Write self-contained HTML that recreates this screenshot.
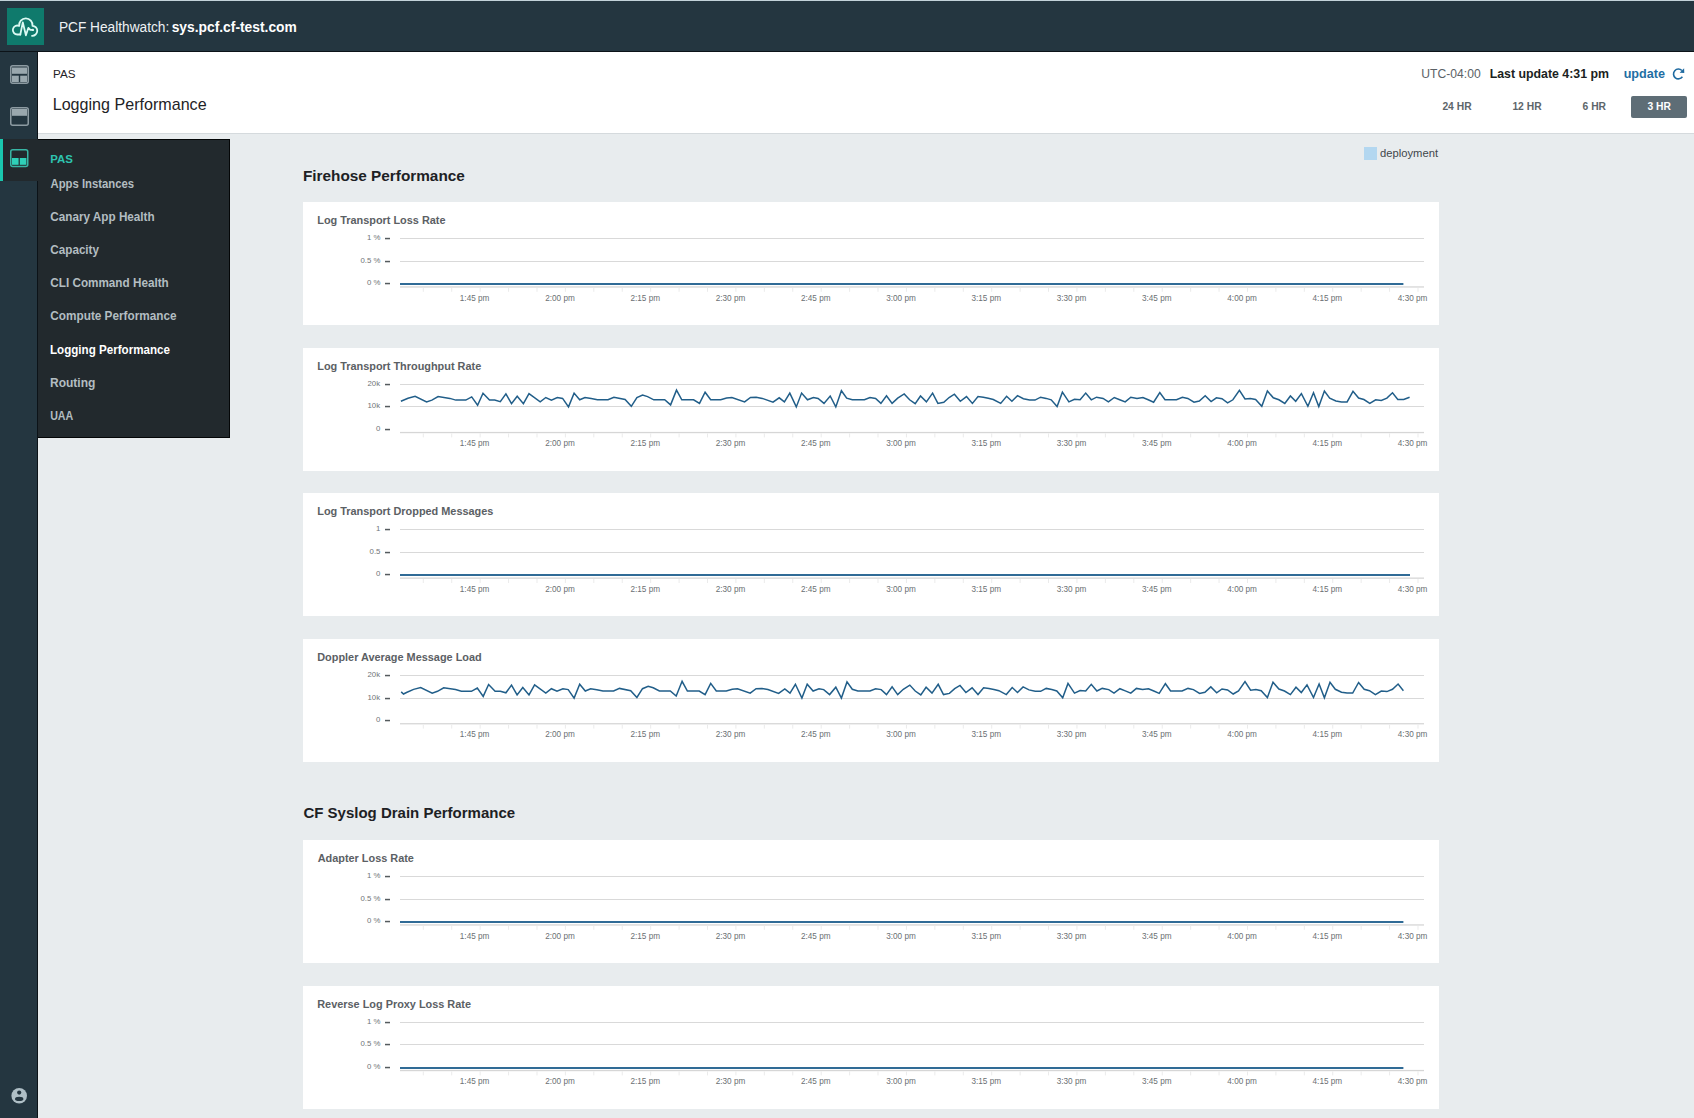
<!DOCTYPE html>
<html>
<head>
<meta charset="utf-8">
<title>PCF Healthwatch - Logging Performance</title>
<style>
html,body{margin:0;padding:0;}
body{width:1694px;height:1118px;overflow:hidden;position:relative;background:#e8ecee;font-family:"Liberation Sans",sans-serif;}
.abs{position:absolute;}
#topline{left:0;top:0;width:1694px;height:1px;background:#c3d2d9;}
#topbar{left:0;top:1px;width:1694px;height:50px;background:#243640;border-bottom:1px solid #0c1318;}
#logo{left:7px;top:8px;width:37px;height:37px;background:#0f7a6c;}
#sidenav{left:0;top:52px;width:37px;height:1066px;background:#243640;border-right:1px solid #0c1318;}
#navactive{left:0;top:139px;width:38px;height:42px;background:#22292d;}
#navbar{left:0;top:139px;width:3px;height:42px;background:#1ac7ae;}
#pagehead{left:38px;top:52px;width:1656px;height:81px;background:#ffffff;border-bottom:1px solid #d5dadd;}
#btn3{left:1631px;top:96px;width:56px;height:22px;background:#5e6d76;border-radius:2px;}
#dropdown{left:38px;top:139px;width:192px;height:299px;background:#22292d;box-sizing:border-box;border-top:1px solid #040607;border-right:1px solid #040607;border-bottom:1px solid #040607;}
#legendsq{left:1364px;top:147px;width:13px;height:13px;background:#b3d7f0;}
.panel{position:absolute;left:303px;width:1136px;height:123px;background:#ffffff;}
#overlay{position:absolute;left:0;top:0;}
#overlay text{font-family:"Liberation Sans",sans-serif;}
</style>
</head>
<body>
<div id="topline" class="abs"></div>
<div id="topbar" class="abs"></div>
<div id="logo" class="abs">
  <svg width="37" height="37" viewBox="7 8 37 37" style="display:block">
    <g fill="none" stroke="#dcfaf3" stroke-width="1.8" stroke-linejoin="round" stroke-linecap="round">
      <path d="M20.3 34.5 H17.4 A4.5 4.5 0 1 1 19.2 25.9 A6.7 6.7 0 1 1 32.5 25.8 A5.0 5.0 0 1 1 32.0 35.8"/>
      <path d="M20.3 34.5 L22.8 22.4 L25.9 35.3 L28.4 27.8 L30.3 29.9 H32.6"/>
    </g>
    <circle cx="32.8" cy="29.9" r="1.2" fill="#dcfaf3"/>
  </svg>
</div>
<div id="sidenav" class="abs">
  <svg width="37" height="1066" viewBox="0 52 37 1066" style="display:block">
    <!-- icon 1 -->
    <rect x="10.75" y="65.75" width="17.5" height="17.5" rx="2" fill="none" stroke="#8d9ba2" stroke-width="1.5"/>
    <rect x="12" y="67.5" width="15" height="6.3" fill="#9aa8ae"/>
    <rect x="12" y="75.7" width="6.8" height="6.3" fill="#9aa8ae"/>
    <rect x="20.2" y="75.7" width="6.8" height="6.3" fill="#9aa8ae"/>
    <!-- icon 2 -->
    <rect x="10.75" y="107.75" width="17.5" height="17.5" rx="2" fill="none" stroke="#8d9ba2" stroke-width="1.5"/>
    <rect x="12" y="109" width="15" height="6.8" fill="#9aa8ae"/>
  </svg>
</div>
<div id="navactive" class="abs"></div>
<div id="navbar" class="abs"></div>
<svg class="abs" style="left:0;top:139px" width="38" height="42" viewBox="0 139 38 42">
    <rect x="10.75" y="149.75" width="17" height="16.8" rx="2" fill="none" stroke="#38b5a4" stroke-width="1.5"/>
    <rect x="12" y="158" width="6.6" height="6.8" fill="#2fd0b8"/>
    <rect x="19.8" y="158" width="6.6" height="6.8" fill="#2fd0b8"/>
</svg>
<svg class="abs" style="left:8px;top:1085px" width="24" height="24" viewBox="8 1085 24 24">
    <circle cx="19.2" cy="1095.8" r="7.8" fill="#afbfc6"/>
    <circle cx="19.2" cy="1092.6" r="2.1" fill="#243640"/>
    <ellipse cx="19.2" cy="1098.9" rx="4.2" ry="2.1" fill="#243640"/>
</svg>
<div id="pagehead" class="abs"></div>
<div id="btn3" class="abs"></div>
<svg class="abs" style="left:1668px;top:64px" width="22" height="20" viewBox="1668 64 22 20">
  <path d="M1681.9 70.5 A4.9 4.9 0 1 0 1682.4 76.8" fill="none" stroke="#1f6aa0" stroke-width="1.6"/>
  <path d="M1684.1 68.3 L1684.3 73.1 L1679.6 72.8 Z" fill="#1f6aa0"/>
</svg>
<div id="legendsq" class="abs"></div>
<div class="panel" style="top:202px"></div>
<div class="panel" style="top:348px"></div>
<div class="panel" style="top:493px"></div>
<div class="panel" style="top:639px"></div>
<div class="panel" style="top:840px"></div>
<div class="panel" style="top:986px"></div>
<div id="dropdown" class="abs"></div>
<svg id="overlay" width="1694" height="1118">
<rect x="385" y="237.8" width="5" height="1.5" fill="#555b5e"/>
<rect x="385" y="260.8" width="5" height="1.5" fill="#555b5e"/>
<rect x="385" y="282.8" width="5" height="1.5" fill="#555b5e"/>
<rect x="400" y="238" width="1024" height="1" fill="#d9d9d9"/>
<rect x="400" y="261" width="1024" height="1" fill="#d9d9d9"/>
<rect x="400" y="286.3" width="1024" height="1.3" fill="#d6d6d6"/>
<rect x="422.80" y="287.8" width="1" height="4" fill="#ebebeb"/>
<rect x="451.22" y="287.8" width="1" height="4" fill="#ebebeb"/>
<rect x="479.64" y="287.8" width="1" height="4" fill="#ebebeb"/>
<rect x="508.06" y="287.8" width="1" height="4" fill="#ebebeb"/>
<rect x="536.48" y="287.8" width="1" height="4" fill="#ebebeb"/>
<rect x="564.90" y="287.8" width="1" height="4" fill="#ebebeb"/>
<rect x="593.32" y="287.8" width="1" height="4" fill="#ebebeb"/>
<rect x="621.74" y="287.8" width="1" height="4" fill="#ebebeb"/>
<rect x="650.16" y="287.8" width="1" height="4" fill="#ebebeb"/>
<rect x="678.58" y="287.8" width="1" height="4" fill="#ebebeb"/>
<rect x="707.00" y="287.8" width="1" height="4" fill="#ebebeb"/>
<rect x="735.42" y="287.8" width="1" height="4" fill="#ebebeb"/>
<rect x="763.84" y="287.8" width="1" height="4" fill="#ebebeb"/>
<rect x="792.26" y="287.8" width="1" height="4" fill="#ebebeb"/>
<rect x="820.68" y="287.8" width="1" height="4" fill="#ebebeb"/>
<rect x="849.10" y="287.8" width="1" height="4" fill="#ebebeb"/>
<rect x="877.52" y="287.8" width="1" height="4" fill="#ebebeb"/>
<rect x="905.94" y="287.8" width="1" height="4" fill="#ebebeb"/>
<rect x="934.36" y="287.8" width="1" height="4" fill="#ebebeb"/>
<rect x="962.78" y="287.8" width="1" height="4" fill="#ebebeb"/>
<rect x="991.20" y="287.8" width="1" height="4" fill="#ebebeb"/>
<rect x="1019.62" y="287.8" width="1" height="4" fill="#ebebeb"/>
<rect x="1048.04" y="287.8" width="1" height="4" fill="#ebebeb"/>
<rect x="1076.46" y="287.8" width="1" height="4" fill="#ebebeb"/>
<rect x="1104.88" y="287.8" width="1" height="4" fill="#ebebeb"/>
<rect x="1133.30" y="287.8" width="1" height="4" fill="#ebebeb"/>
<rect x="1161.72" y="287.8" width="1" height="4" fill="#ebebeb"/>
<rect x="1190.14" y="287.8" width="1" height="4" fill="#ebebeb"/>
<rect x="1218.56" y="287.8" width="1" height="4" fill="#ebebeb"/>
<rect x="1246.98" y="287.8" width="1" height="4" fill="#ebebeb"/>
<rect x="1275.40" y="287.8" width="1" height="4" fill="#ebebeb"/>
<rect x="1303.82" y="287.8" width="1" height="4" fill="#ebebeb"/>
<rect x="1332.24" y="287.8" width="1" height="4" fill="#ebebeb"/>
<rect x="1360.66" y="287.8" width="1" height="4" fill="#ebebeb"/>
<rect x="1389.08" y="287.8" width="1" height="4" fill="#ebebeb"/>
<rect x="1417.50" y="287.8" width="1" height="4" fill="#ebebeb"/>
<text x="459.82" y="300.50" font-size="8.20" font-weight="400" fill="#6b7073">1:45 pm</text>
<text x="545.19" y="300.50" font-size="8.20" font-weight="400" fill="#6b7073">2:00 pm</text>
<text x="630.44" y="300.50" font-size="8.20" font-weight="400" fill="#6b7073">2:15 pm</text>
<text x="715.69" y="300.50" font-size="8.20" font-weight="400" fill="#6b7073">2:30 pm</text>
<text x="800.94" y="300.50" font-size="8.20" font-weight="400" fill="#6b7073">2:45 pm</text>
<text x="886.23" y="300.50" font-size="8.20" font-weight="400" fill="#6b7073">3:00 pm</text>
<text x="971.48" y="300.50" font-size="8.20" font-weight="400" fill="#6b7073">3:15 pm</text>
<text x="1056.73" y="300.50" font-size="8.20" font-weight="400" fill="#6b7073">3:30 pm</text>
<text x="1141.98" y="300.50" font-size="8.20" font-weight="400" fill="#6b7073">3:45 pm</text>
<text x="1227.31" y="300.50" font-size="8.20" font-weight="400" fill="#6b7073">4:00 pm</text>
<text x="1312.56" y="300.50" font-size="8.20" font-weight="400" fill="#6b7073">4:15 pm</text>
<text x="1397.81" y="300.50" font-size="8.20" font-weight="400" fill="#6b7073">4:30 pm</text>
<rect x="400" y="283" width="1003.4" height="2" fill="#306b96"/>
<rect x="385" y="383.8" width="5" height="1.5" fill="#555b5e"/>
<rect x="385" y="405.8" width="5" height="1.5" fill="#555b5e"/>
<rect x="385" y="428.8" width="5" height="1.5" fill="#555b5e"/>
<rect x="400" y="384" width="1024" height="1" fill="#d9d9d9"/>
<rect x="400" y="406" width="1024" height="1" fill="#d9d9d9"/>
<rect x="400" y="431.9" width="1024" height="1.3" fill="#d6d6d6"/>
<rect x="422.80" y="433.4" width="1" height="4" fill="#ebebeb"/>
<rect x="451.22" y="433.4" width="1" height="4" fill="#ebebeb"/>
<rect x="479.64" y="433.4" width="1" height="4" fill="#ebebeb"/>
<rect x="508.06" y="433.4" width="1" height="4" fill="#ebebeb"/>
<rect x="536.48" y="433.4" width="1" height="4" fill="#ebebeb"/>
<rect x="564.90" y="433.4" width="1" height="4" fill="#ebebeb"/>
<rect x="593.32" y="433.4" width="1" height="4" fill="#ebebeb"/>
<rect x="621.74" y="433.4" width="1" height="4" fill="#ebebeb"/>
<rect x="650.16" y="433.4" width="1" height="4" fill="#ebebeb"/>
<rect x="678.58" y="433.4" width="1" height="4" fill="#ebebeb"/>
<rect x="707.00" y="433.4" width="1" height="4" fill="#ebebeb"/>
<rect x="735.42" y="433.4" width="1" height="4" fill="#ebebeb"/>
<rect x="763.84" y="433.4" width="1" height="4" fill="#ebebeb"/>
<rect x="792.26" y="433.4" width="1" height="4" fill="#ebebeb"/>
<rect x="820.68" y="433.4" width="1" height="4" fill="#ebebeb"/>
<rect x="849.10" y="433.4" width="1" height="4" fill="#ebebeb"/>
<rect x="877.52" y="433.4" width="1" height="4" fill="#ebebeb"/>
<rect x="905.94" y="433.4" width="1" height="4" fill="#ebebeb"/>
<rect x="934.36" y="433.4" width="1" height="4" fill="#ebebeb"/>
<rect x="962.78" y="433.4" width="1" height="4" fill="#ebebeb"/>
<rect x="991.20" y="433.4" width="1" height="4" fill="#ebebeb"/>
<rect x="1019.62" y="433.4" width="1" height="4" fill="#ebebeb"/>
<rect x="1048.04" y="433.4" width="1" height="4" fill="#ebebeb"/>
<rect x="1076.46" y="433.4" width="1" height="4" fill="#ebebeb"/>
<rect x="1104.88" y="433.4" width="1" height="4" fill="#ebebeb"/>
<rect x="1133.30" y="433.4" width="1" height="4" fill="#ebebeb"/>
<rect x="1161.72" y="433.4" width="1" height="4" fill="#ebebeb"/>
<rect x="1190.14" y="433.4" width="1" height="4" fill="#ebebeb"/>
<rect x="1218.56" y="433.4" width="1" height="4" fill="#ebebeb"/>
<rect x="1246.98" y="433.4" width="1" height="4" fill="#ebebeb"/>
<rect x="1275.40" y="433.4" width="1" height="4" fill="#ebebeb"/>
<rect x="1303.82" y="433.4" width="1" height="4" fill="#ebebeb"/>
<rect x="1332.24" y="433.4" width="1" height="4" fill="#ebebeb"/>
<rect x="1360.66" y="433.4" width="1" height="4" fill="#ebebeb"/>
<rect x="1389.08" y="433.4" width="1" height="4" fill="#ebebeb"/>
<rect x="1417.50" y="433.4" width="1" height="4" fill="#ebebeb"/>
<text x="459.82" y="446.10" font-size="8.20" font-weight="400" fill="#6b7073">1:45 pm</text>
<text x="545.19" y="446.10" font-size="8.20" font-weight="400" fill="#6b7073">2:00 pm</text>
<text x="630.44" y="446.10" font-size="8.20" font-weight="400" fill="#6b7073">2:15 pm</text>
<text x="715.69" y="446.10" font-size="8.20" font-weight="400" fill="#6b7073">2:30 pm</text>
<text x="800.94" y="446.10" font-size="8.20" font-weight="400" fill="#6b7073">2:45 pm</text>
<text x="886.23" y="446.10" font-size="8.20" font-weight="400" fill="#6b7073">3:00 pm</text>
<text x="971.48" y="446.10" font-size="8.20" font-weight="400" fill="#6b7073">3:15 pm</text>
<text x="1056.73" y="446.10" font-size="8.20" font-weight="400" fill="#6b7073">3:30 pm</text>
<text x="1141.98" y="446.10" font-size="8.20" font-weight="400" fill="#6b7073">3:45 pm</text>
<text x="1227.31" y="446.10" font-size="8.20" font-weight="400" fill="#6b7073">4:00 pm</text>
<text x="1312.56" y="446.10" font-size="8.20" font-weight="400" fill="#6b7073">4:15 pm</text>
<text x="1397.81" y="446.10" font-size="8.20" font-weight="400" fill="#6b7073">4:30 pm</text>
<polyline points="400.9,401.3 408.0,398.2 415.1,396.3 426.6,401.9 431.9,400.1 438.1,396.6 449.9,398.4 455.8,400.1 465.8,400.1 471.7,396.9 477.6,405.2 483.0,393.3 489.5,400.1 494.7,400.1 500.3,401.6 505.9,393.9 511.5,403.7 517.2,396.3 523.4,403.7 529.0,393.6 540.2,401.9 545.8,397.5 551.4,400.1 557.3,397.5 562.6,398.4 568.5,406.9 574.1,393.1 579.7,399.8 585.0,397.5 591.2,398.6 597.4,399.8 608.0,399.8 613.9,397.2 625.1,399.5 631.3,406.3 636.9,397.5 642.6,395.1 647.6,396.6 653.8,399.8 664.7,399.8 670.6,404.9 676.5,390.1 681.8,399.8 693.6,399.8 699.5,403.4 705.1,392.2 710.7,399.8 720.7,399.8 726.6,398.1 731.9,397.5 744.6,401.9 750.5,397.5 756.2,397.2 762.3,398.4 773.0,402.2 779.2,397.8 784.4,401.9 789.8,393.1 796.3,406.9 801.6,393.1 807.5,399.8 813.4,397.5 818.1,398.4 824.0,403.4 830.2,396.0 835.8,406.9 841.4,390.7 846.7,398.1 852.3,399.8 864.4,399.8 870.0,397.5 875.6,398.4 880.9,403.4 886.5,395.7 892.1,403.4 897.7,398.1 904.2,393.9 909.6,399.8 915.2,403.7 920.5,396.0 926.4,401.9 932.6,393.1 937.9,403.4 943.8,402.2 949.1,397.5 954.4,394.2 960.3,401.3 966.5,396.6 972.4,403.4 978.0,396.6 983.3,397.2 988.3,398.3 993.3,399.5 1000.7,403.4 1006.6,396.3 1011.9,401.3 1017.5,395.7 1023.4,398.7 1029.6,400.1 1035.0,400.1 1040.6,397.2 1046.2,398.4 1051.2,399.8 1057.1,406.6 1062.4,392.2 1068.9,401.9 1074.5,399.3 1080.1,399.8 1085.7,393.1 1091.3,399.8 1096.6,397.2 1103.1,398.4 1108.4,401.9 1114.3,397.5 1119.7,399.7 1125.2,401.9 1130.8,397.2 1137.0,398.4 1142.9,397.5 1148.2,399.8 1153.6,402.2 1159.8,392.5 1165.0,399.8 1170.7,399.8 1176.5,399.8 1182.4,397.2 1187.8,398.4 1194.0,402.2 1199.3,401.0 1205.2,395.7 1211.1,401.6 1216.4,397.8 1222.0,398.7 1227.6,402.8 1232.9,399.8 1239.4,390.4 1245.0,399.0 1250.3,398.4 1255.6,399.5 1261.8,406.3 1267.4,391.0 1273.3,397.8 1278.9,399.8 1284.8,403.4 1290.4,396.0 1295.7,401.3 1301.4,393.6 1307.9,406.3 1313.5,392.8 1318.8,406.6 1324.4,391.0 1329.7,398.1 1335.9,401.0 1341.5,401.9 1347.1,401.9 1353.0,391.3 1358.6,398.1 1363.9,399.5 1369.8,403.4 1375.7,399.8 1381.3,400.4 1386.9,398.1 1392.5,392.8 1397.8,399.5 1403.7,399.5 1409.6,397.2" fill="none" stroke="#215e89" stroke-width="1.5" stroke-linejoin="miter"/>
<rect x="385" y="528.8" width="5" height="1.5" fill="#555b5e"/>
<rect x="385" y="551.8" width="5" height="1.5" fill="#555b5e"/>
<rect x="385" y="573.8" width="5" height="1.5" fill="#555b5e"/>
<rect x="400" y="529" width="1024" height="1" fill="#d9d9d9"/>
<rect x="400" y="552" width="1024" height="1" fill="#d9d9d9"/>
<rect x="400" y="577.5" width="1024" height="1.3" fill="#d6d6d6"/>
<rect x="422.80" y="579.0" width="1" height="4" fill="#ebebeb"/>
<rect x="451.22" y="579.0" width="1" height="4" fill="#ebebeb"/>
<rect x="479.64" y="579.0" width="1" height="4" fill="#ebebeb"/>
<rect x="508.06" y="579.0" width="1" height="4" fill="#ebebeb"/>
<rect x="536.48" y="579.0" width="1" height="4" fill="#ebebeb"/>
<rect x="564.90" y="579.0" width="1" height="4" fill="#ebebeb"/>
<rect x="593.32" y="579.0" width="1" height="4" fill="#ebebeb"/>
<rect x="621.74" y="579.0" width="1" height="4" fill="#ebebeb"/>
<rect x="650.16" y="579.0" width="1" height="4" fill="#ebebeb"/>
<rect x="678.58" y="579.0" width="1" height="4" fill="#ebebeb"/>
<rect x="707.00" y="579.0" width="1" height="4" fill="#ebebeb"/>
<rect x="735.42" y="579.0" width="1" height="4" fill="#ebebeb"/>
<rect x="763.84" y="579.0" width="1" height="4" fill="#ebebeb"/>
<rect x="792.26" y="579.0" width="1" height="4" fill="#ebebeb"/>
<rect x="820.68" y="579.0" width="1" height="4" fill="#ebebeb"/>
<rect x="849.10" y="579.0" width="1" height="4" fill="#ebebeb"/>
<rect x="877.52" y="579.0" width="1" height="4" fill="#ebebeb"/>
<rect x="905.94" y="579.0" width="1" height="4" fill="#ebebeb"/>
<rect x="934.36" y="579.0" width="1" height="4" fill="#ebebeb"/>
<rect x="962.78" y="579.0" width="1" height="4" fill="#ebebeb"/>
<rect x="991.20" y="579.0" width="1" height="4" fill="#ebebeb"/>
<rect x="1019.62" y="579.0" width="1" height="4" fill="#ebebeb"/>
<rect x="1048.04" y="579.0" width="1" height="4" fill="#ebebeb"/>
<rect x="1076.46" y="579.0" width="1" height="4" fill="#ebebeb"/>
<rect x="1104.88" y="579.0" width="1" height="4" fill="#ebebeb"/>
<rect x="1133.30" y="579.0" width="1" height="4" fill="#ebebeb"/>
<rect x="1161.72" y="579.0" width="1" height="4" fill="#ebebeb"/>
<rect x="1190.14" y="579.0" width="1" height="4" fill="#ebebeb"/>
<rect x="1218.56" y="579.0" width="1" height="4" fill="#ebebeb"/>
<rect x="1246.98" y="579.0" width="1" height="4" fill="#ebebeb"/>
<rect x="1275.40" y="579.0" width="1" height="4" fill="#ebebeb"/>
<rect x="1303.82" y="579.0" width="1" height="4" fill="#ebebeb"/>
<rect x="1332.24" y="579.0" width="1" height="4" fill="#ebebeb"/>
<rect x="1360.66" y="579.0" width="1" height="4" fill="#ebebeb"/>
<rect x="1389.08" y="579.0" width="1" height="4" fill="#ebebeb"/>
<rect x="1417.50" y="579.0" width="1" height="4" fill="#ebebeb"/>
<text x="459.82" y="591.70" font-size="8.20" font-weight="400" fill="#6b7073">1:45 pm</text>
<text x="545.19" y="591.70" font-size="8.20" font-weight="400" fill="#6b7073">2:00 pm</text>
<text x="630.44" y="591.70" font-size="8.20" font-weight="400" fill="#6b7073">2:15 pm</text>
<text x="715.69" y="591.70" font-size="8.20" font-weight="400" fill="#6b7073">2:30 pm</text>
<text x="800.94" y="591.70" font-size="8.20" font-weight="400" fill="#6b7073">2:45 pm</text>
<text x="886.23" y="591.70" font-size="8.20" font-weight="400" fill="#6b7073">3:00 pm</text>
<text x="971.48" y="591.70" font-size="8.20" font-weight="400" fill="#6b7073">3:15 pm</text>
<text x="1056.73" y="591.70" font-size="8.20" font-weight="400" fill="#6b7073">3:30 pm</text>
<text x="1141.98" y="591.70" font-size="8.20" font-weight="400" fill="#6b7073">3:45 pm</text>
<text x="1227.31" y="591.70" font-size="8.20" font-weight="400" fill="#6b7073">4:00 pm</text>
<text x="1312.56" y="591.70" font-size="8.20" font-weight="400" fill="#6b7073">4:15 pm</text>
<text x="1397.81" y="591.70" font-size="8.20" font-weight="400" fill="#6b7073">4:30 pm</text>
<rect x="400" y="574" width="1010.0" height="2" fill="#306b96"/>
<rect x="385" y="674.8" width="5" height="1.5" fill="#555b5e"/>
<rect x="385" y="697.8" width="5" height="1.5" fill="#555b5e"/>
<rect x="385" y="719.8" width="5" height="1.5" fill="#555b5e"/>
<rect x="400" y="675" width="1024" height="1" fill="#d9d9d9"/>
<rect x="400" y="698" width="1024" height="1" fill="#d9d9d9"/>
<rect x="400" y="723.1" width="1024" height="1.3" fill="#d6d6d6"/>
<rect x="422.80" y="724.6" width="1" height="4" fill="#ebebeb"/>
<rect x="451.22" y="724.6" width="1" height="4" fill="#ebebeb"/>
<rect x="479.64" y="724.6" width="1" height="4" fill="#ebebeb"/>
<rect x="508.06" y="724.6" width="1" height="4" fill="#ebebeb"/>
<rect x="536.48" y="724.6" width="1" height="4" fill="#ebebeb"/>
<rect x="564.90" y="724.6" width="1" height="4" fill="#ebebeb"/>
<rect x="593.32" y="724.6" width="1" height="4" fill="#ebebeb"/>
<rect x="621.74" y="724.6" width="1" height="4" fill="#ebebeb"/>
<rect x="650.16" y="724.6" width="1" height="4" fill="#ebebeb"/>
<rect x="678.58" y="724.6" width="1" height="4" fill="#ebebeb"/>
<rect x="707.00" y="724.6" width="1" height="4" fill="#ebebeb"/>
<rect x="735.42" y="724.6" width="1" height="4" fill="#ebebeb"/>
<rect x="763.84" y="724.6" width="1" height="4" fill="#ebebeb"/>
<rect x="792.26" y="724.6" width="1" height="4" fill="#ebebeb"/>
<rect x="820.68" y="724.6" width="1" height="4" fill="#ebebeb"/>
<rect x="849.10" y="724.6" width="1" height="4" fill="#ebebeb"/>
<rect x="877.52" y="724.6" width="1" height="4" fill="#ebebeb"/>
<rect x="905.94" y="724.6" width="1" height="4" fill="#ebebeb"/>
<rect x="934.36" y="724.6" width="1" height="4" fill="#ebebeb"/>
<rect x="962.78" y="724.6" width="1" height="4" fill="#ebebeb"/>
<rect x="991.20" y="724.6" width="1" height="4" fill="#ebebeb"/>
<rect x="1019.62" y="724.6" width="1" height="4" fill="#ebebeb"/>
<rect x="1048.04" y="724.6" width="1" height="4" fill="#ebebeb"/>
<rect x="1076.46" y="724.6" width="1" height="4" fill="#ebebeb"/>
<rect x="1104.88" y="724.6" width="1" height="4" fill="#ebebeb"/>
<rect x="1133.30" y="724.6" width="1" height="4" fill="#ebebeb"/>
<rect x="1161.72" y="724.6" width="1" height="4" fill="#ebebeb"/>
<rect x="1190.14" y="724.6" width="1" height="4" fill="#ebebeb"/>
<rect x="1218.56" y="724.6" width="1" height="4" fill="#ebebeb"/>
<rect x="1246.98" y="724.6" width="1" height="4" fill="#ebebeb"/>
<rect x="1275.40" y="724.6" width="1" height="4" fill="#ebebeb"/>
<rect x="1303.82" y="724.6" width="1" height="4" fill="#ebebeb"/>
<rect x="1332.24" y="724.6" width="1" height="4" fill="#ebebeb"/>
<rect x="1360.66" y="724.6" width="1" height="4" fill="#ebebeb"/>
<rect x="1389.08" y="724.6" width="1" height="4" fill="#ebebeb"/>
<rect x="1417.50" y="724.6" width="1" height="4" fill="#ebebeb"/>
<text x="459.82" y="737.30" font-size="8.20" font-weight="400" fill="#6b7073">1:45 pm</text>
<text x="545.19" y="737.30" font-size="8.20" font-weight="400" fill="#6b7073">2:00 pm</text>
<text x="630.44" y="737.30" font-size="8.20" font-weight="400" fill="#6b7073">2:15 pm</text>
<text x="715.69" y="737.30" font-size="8.20" font-weight="400" fill="#6b7073">2:30 pm</text>
<text x="800.94" y="737.30" font-size="8.20" font-weight="400" fill="#6b7073">2:45 pm</text>
<text x="886.23" y="737.30" font-size="8.20" font-weight="400" fill="#6b7073">3:00 pm</text>
<text x="971.48" y="737.30" font-size="8.20" font-weight="400" fill="#6b7073">3:15 pm</text>
<text x="1056.73" y="737.30" font-size="8.20" font-weight="400" fill="#6b7073">3:30 pm</text>
<text x="1141.98" y="737.30" font-size="8.20" font-weight="400" fill="#6b7073">3:45 pm</text>
<text x="1227.31" y="737.30" font-size="8.20" font-weight="400" fill="#6b7073">4:00 pm</text>
<text x="1312.56" y="737.30" font-size="8.20" font-weight="400" fill="#6b7073">4:15 pm</text>
<text x="1397.81" y="737.30" font-size="8.20" font-weight="400" fill="#6b7073">4:30 pm</text>
<polyline points="401.2,691.9 403.5,694.0 406.5,692.5 413.6,689.4 420.7,687.5 432.2,693.1 437.5,691.3 443.7,687.8 455.5,689.6 461.4,691.3 471.4,691.3 477.3,688.1 483.2,696.4 488.6,684.5 495.1,691.3 500.3,691.3 505.9,692.8 511.5,685.1 517.1,694.9 522.8,687.5 529.0,694.9 534.6,684.8 545.8,693.1 551.4,688.7 557.0,691.3 562.9,688.7 568.2,689.6 574.1,698.1 579.7,684.3 585.3,691.0 590.6,688.7 596.8,689.8 603.0,691.0 613.6,691.0 619.5,688.4 630.7,690.7 636.9,697.5 642.5,688.7 648.2,686.3 653.2,687.8 659.4,691.0 670.3,691.0 676.2,696.1 682.1,681.3 687.4,691.0 699.2,691.0 705.1,694.6 710.7,683.4 716.3,691.0 726.3,691.0 732.2,689.3 737.5,688.7 750.2,693.1 756.1,688.7 761.8,688.4 767.9,689.6 778.6,693.4 784.8,689.0 790.0,693.1 795.4,684.3 801.9,698.1 807.2,684.3 813.1,691.0 819.0,688.7 823.7,689.6 829.6,694.6 835.8,687.2 841.4,698.1 847.0,681.9 852.3,689.3 857.9,691.0 870.0,691.0 875.6,688.7 881.2,689.6 886.5,694.6 892.1,686.9 897.7,694.6 903.3,689.3 909.8,685.1 915.2,691.0 920.8,694.9 926.1,687.2 932.0,693.1 938.2,684.3 943.5,694.6 949.4,693.4 954.7,688.7 960.0,685.4 965.9,692.5 972.1,687.8 978.0,694.6 983.6,687.8 988.9,688.4 993.9,689.5 998.9,690.7 1006.3,694.6 1012.2,687.5 1017.5,692.5 1023.1,686.9 1029.0,689.9 1035.2,691.3 1040.6,691.3 1046.2,688.4 1051.8,689.6 1056.8,691.0 1062.7,697.8 1068.0,683.4 1074.5,693.1 1080.1,690.5 1085.7,691.0 1091.3,684.3 1096.9,691.0 1102.2,688.4 1108.7,689.6 1114.0,693.1 1119.9,688.7 1125.3,690.9 1130.8,693.1 1136.4,688.4 1142.6,689.6 1148.5,688.7 1153.8,691.0 1159.2,693.4 1165.4,683.7 1170.6,691.0 1176.3,691.0 1182.1,691.0 1188.0,688.4 1193.4,689.6 1199.6,693.4 1204.9,692.2 1210.8,686.9 1216.7,692.8 1222.0,689.0 1227.6,689.9 1233.2,694.0 1238.5,691.0 1245.0,681.6 1250.6,690.2 1255.9,689.6 1261.2,690.7 1267.4,697.5 1273.0,682.2 1278.9,689.0 1284.5,691.0 1290.4,694.6 1296.0,687.2 1301.3,692.5 1307.0,684.8 1313.5,697.5 1319.1,684.0 1324.4,697.8 1330.0,682.2 1335.3,689.3 1341.5,692.2 1347.1,693.1 1352.7,693.1 1358.6,682.5 1364.2,689.3 1369.5,690.7 1375.4,694.6 1381.3,691.0 1386.9,691.6 1392.5,689.3 1398.1,684.0 1403.4,690.7" fill="none" stroke="#215e89" stroke-width="1.5" stroke-linejoin="miter"/>
<rect x="385" y="875.8" width="5" height="1.5" fill="#555b5e"/>
<rect x="385" y="898.8" width="5" height="1.5" fill="#555b5e"/>
<rect x="385" y="920.8" width="5" height="1.5" fill="#555b5e"/>
<rect x="400" y="876" width="1024" height="1" fill="#d9d9d9"/>
<rect x="400" y="899" width="1024" height="1" fill="#d9d9d9"/>
<rect x="400" y="924.3" width="1024" height="1.3" fill="#d6d6d6"/>
<rect x="422.80" y="925.8" width="1" height="4" fill="#ebebeb"/>
<rect x="451.22" y="925.8" width="1" height="4" fill="#ebebeb"/>
<rect x="479.64" y="925.8" width="1" height="4" fill="#ebebeb"/>
<rect x="508.06" y="925.8" width="1" height="4" fill="#ebebeb"/>
<rect x="536.48" y="925.8" width="1" height="4" fill="#ebebeb"/>
<rect x="564.90" y="925.8" width="1" height="4" fill="#ebebeb"/>
<rect x="593.32" y="925.8" width="1" height="4" fill="#ebebeb"/>
<rect x="621.74" y="925.8" width="1" height="4" fill="#ebebeb"/>
<rect x="650.16" y="925.8" width="1" height="4" fill="#ebebeb"/>
<rect x="678.58" y="925.8" width="1" height="4" fill="#ebebeb"/>
<rect x="707.00" y="925.8" width="1" height="4" fill="#ebebeb"/>
<rect x="735.42" y="925.8" width="1" height="4" fill="#ebebeb"/>
<rect x="763.84" y="925.8" width="1" height="4" fill="#ebebeb"/>
<rect x="792.26" y="925.8" width="1" height="4" fill="#ebebeb"/>
<rect x="820.68" y="925.8" width="1" height="4" fill="#ebebeb"/>
<rect x="849.10" y="925.8" width="1" height="4" fill="#ebebeb"/>
<rect x="877.52" y="925.8" width="1" height="4" fill="#ebebeb"/>
<rect x="905.94" y="925.8" width="1" height="4" fill="#ebebeb"/>
<rect x="934.36" y="925.8" width="1" height="4" fill="#ebebeb"/>
<rect x="962.78" y="925.8" width="1" height="4" fill="#ebebeb"/>
<rect x="991.20" y="925.8" width="1" height="4" fill="#ebebeb"/>
<rect x="1019.62" y="925.8" width="1" height="4" fill="#ebebeb"/>
<rect x="1048.04" y="925.8" width="1" height="4" fill="#ebebeb"/>
<rect x="1076.46" y="925.8" width="1" height="4" fill="#ebebeb"/>
<rect x="1104.88" y="925.8" width="1" height="4" fill="#ebebeb"/>
<rect x="1133.30" y="925.8" width="1" height="4" fill="#ebebeb"/>
<rect x="1161.72" y="925.8" width="1" height="4" fill="#ebebeb"/>
<rect x="1190.14" y="925.8" width="1" height="4" fill="#ebebeb"/>
<rect x="1218.56" y="925.8" width="1" height="4" fill="#ebebeb"/>
<rect x="1246.98" y="925.8" width="1" height="4" fill="#ebebeb"/>
<rect x="1275.40" y="925.8" width="1" height="4" fill="#ebebeb"/>
<rect x="1303.82" y="925.8" width="1" height="4" fill="#ebebeb"/>
<rect x="1332.24" y="925.8" width="1" height="4" fill="#ebebeb"/>
<rect x="1360.66" y="925.8" width="1" height="4" fill="#ebebeb"/>
<rect x="1389.08" y="925.8" width="1" height="4" fill="#ebebeb"/>
<rect x="1417.50" y="925.8" width="1" height="4" fill="#ebebeb"/>
<text x="459.82" y="938.50" font-size="8.20" font-weight="400" fill="#6b7073">1:45 pm</text>
<text x="545.19" y="938.50" font-size="8.20" font-weight="400" fill="#6b7073">2:00 pm</text>
<text x="630.44" y="938.50" font-size="8.20" font-weight="400" fill="#6b7073">2:15 pm</text>
<text x="715.69" y="938.50" font-size="8.20" font-weight="400" fill="#6b7073">2:30 pm</text>
<text x="800.94" y="938.50" font-size="8.20" font-weight="400" fill="#6b7073">2:45 pm</text>
<text x="886.23" y="938.50" font-size="8.20" font-weight="400" fill="#6b7073">3:00 pm</text>
<text x="971.48" y="938.50" font-size="8.20" font-weight="400" fill="#6b7073">3:15 pm</text>
<text x="1056.73" y="938.50" font-size="8.20" font-weight="400" fill="#6b7073">3:30 pm</text>
<text x="1141.98" y="938.50" font-size="8.20" font-weight="400" fill="#6b7073">3:45 pm</text>
<text x="1227.31" y="938.50" font-size="8.20" font-weight="400" fill="#6b7073">4:00 pm</text>
<text x="1312.56" y="938.50" font-size="8.20" font-weight="400" fill="#6b7073">4:15 pm</text>
<text x="1397.81" y="938.50" font-size="8.20" font-weight="400" fill="#6b7073">4:30 pm</text>
<rect x="400" y="921" width="1003.4" height="2" fill="#306b96"/>
<rect x="385" y="1021.8" width="5" height="1.5" fill="#555b5e"/>
<rect x="385" y="1043.8" width="5" height="1.5" fill="#555b5e"/>
<rect x="385" y="1066.8" width="5" height="1.5" fill="#555b5e"/>
<rect x="400" y="1022" width="1024" height="1" fill="#d9d9d9"/>
<rect x="400" y="1044" width="1024" height="1" fill="#d9d9d9"/>
<rect x="400" y="1069.9" width="1024" height="1.3" fill="#d6d6d6"/>
<rect x="422.80" y="1071.4" width="1" height="4" fill="#ebebeb"/>
<rect x="451.22" y="1071.4" width="1" height="4" fill="#ebebeb"/>
<rect x="479.64" y="1071.4" width="1" height="4" fill="#ebebeb"/>
<rect x="508.06" y="1071.4" width="1" height="4" fill="#ebebeb"/>
<rect x="536.48" y="1071.4" width="1" height="4" fill="#ebebeb"/>
<rect x="564.90" y="1071.4" width="1" height="4" fill="#ebebeb"/>
<rect x="593.32" y="1071.4" width="1" height="4" fill="#ebebeb"/>
<rect x="621.74" y="1071.4" width="1" height="4" fill="#ebebeb"/>
<rect x="650.16" y="1071.4" width="1" height="4" fill="#ebebeb"/>
<rect x="678.58" y="1071.4" width="1" height="4" fill="#ebebeb"/>
<rect x="707.00" y="1071.4" width="1" height="4" fill="#ebebeb"/>
<rect x="735.42" y="1071.4" width="1" height="4" fill="#ebebeb"/>
<rect x="763.84" y="1071.4" width="1" height="4" fill="#ebebeb"/>
<rect x="792.26" y="1071.4" width="1" height="4" fill="#ebebeb"/>
<rect x="820.68" y="1071.4" width="1" height="4" fill="#ebebeb"/>
<rect x="849.10" y="1071.4" width="1" height="4" fill="#ebebeb"/>
<rect x="877.52" y="1071.4" width="1" height="4" fill="#ebebeb"/>
<rect x="905.94" y="1071.4" width="1" height="4" fill="#ebebeb"/>
<rect x="934.36" y="1071.4" width="1" height="4" fill="#ebebeb"/>
<rect x="962.78" y="1071.4" width="1" height="4" fill="#ebebeb"/>
<rect x="991.20" y="1071.4" width="1" height="4" fill="#ebebeb"/>
<rect x="1019.62" y="1071.4" width="1" height="4" fill="#ebebeb"/>
<rect x="1048.04" y="1071.4" width="1" height="4" fill="#ebebeb"/>
<rect x="1076.46" y="1071.4" width="1" height="4" fill="#ebebeb"/>
<rect x="1104.88" y="1071.4" width="1" height="4" fill="#ebebeb"/>
<rect x="1133.30" y="1071.4" width="1" height="4" fill="#ebebeb"/>
<rect x="1161.72" y="1071.4" width="1" height="4" fill="#ebebeb"/>
<rect x="1190.14" y="1071.4" width="1" height="4" fill="#ebebeb"/>
<rect x="1218.56" y="1071.4" width="1" height="4" fill="#ebebeb"/>
<rect x="1246.98" y="1071.4" width="1" height="4" fill="#ebebeb"/>
<rect x="1275.40" y="1071.4" width="1" height="4" fill="#ebebeb"/>
<rect x="1303.82" y="1071.4" width="1" height="4" fill="#ebebeb"/>
<rect x="1332.24" y="1071.4" width="1" height="4" fill="#ebebeb"/>
<rect x="1360.66" y="1071.4" width="1" height="4" fill="#ebebeb"/>
<rect x="1389.08" y="1071.4" width="1" height="4" fill="#ebebeb"/>
<rect x="1417.50" y="1071.4" width="1" height="4" fill="#ebebeb"/>
<text x="459.82" y="1084.10" font-size="8.20" font-weight="400" fill="#6b7073">1:45 pm</text>
<text x="545.19" y="1084.10" font-size="8.20" font-weight="400" fill="#6b7073">2:00 pm</text>
<text x="630.44" y="1084.10" font-size="8.20" font-weight="400" fill="#6b7073">2:15 pm</text>
<text x="715.69" y="1084.10" font-size="8.20" font-weight="400" fill="#6b7073">2:30 pm</text>
<text x="800.94" y="1084.10" font-size="8.20" font-weight="400" fill="#6b7073">2:45 pm</text>
<text x="886.23" y="1084.10" font-size="8.20" font-weight="400" fill="#6b7073">3:00 pm</text>
<text x="971.48" y="1084.10" font-size="8.20" font-weight="400" fill="#6b7073">3:15 pm</text>
<text x="1056.73" y="1084.10" font-size="8.20" font-weight="400" fill="#6b7073">3:30 pm</text>
<text x="1141.98" y="1084.10" font-size="8.20" font-weight="400" fill="#6b7073">3:45 pm</text>
<text x="1227.31" y="1084.10" font-size="8.20" font-weight="400" fill="#6b7073">4:00 pm</text>
<text x="1312.56" y="1084.10" font-size="8.20" font-weight="400" fill="#6b7073">4:15 pm</text>
<text x="1397.81" y="1084.10" font-size="8.20" font-weight="400" fill="#6b7073">4:30 pm</text>
<rect x="400" y="1067" width="1003.4" height="2" fill="#306b96"/>
<text x="58.90" y="31.50" font-size="14.93" font-weight="400" fill="#eef2f4" textLength="110.41" lengthAdjust="spacingAndGlyphs">PCF Healthwatch: </text>
<text x="171.65" y="31.50" font-size="14.93" font-weight="700" fill="#ffffff" textLength="125.16" lengthAdjust="spacingAndGlyphs">sys.pcf.cf-test.com</text>
<text x="53.07" y="78.00" font-size="11.67" font-weight="400" fill="#1f2326">PAS</text>
<text x="52.71" y="110.40" font-size="16.10" font-weight="400" fill="#1f2326">Logging Performance</text>
<text x="1421.33" y="78.30" font-size="12.14" font-weight="400" fill="#5b6266">UTC-04:00</text>
<text x="1489.64" y="78.30" font-size="12.35" font-weight="700" fill="#1b1f22">Last update 4:31 pm</text>
<text x="1623.64" y="77.80" font-size="12.64" font-weight="700" fill="#1f6ea3">update</text>
<text x="1442.39" y="110.20" font-size="10.30" font-weight="700" fill="#5d666b">24 HR</text>
<text x="1512.38" y="110.20" font-size="10.30" font-weight="700" fill="#5d666b">12 HR</text>
<text x="1582.59" y="110.20" font-size="10.30" font-weight="700" fill="#5d666b">6 HR</text>
<text x="1647.39" y="110.20" font-size="10.30" font-weight="700" fill="#ffffff">3 HR</text>
<text x="50.20" y="162.60" font-size="11.40" font-weight="700" fill="#2ec4b0">PAS</text>
<text x="50.46" y="187.70" font-size="12.32" font-weight="700" fill="#b3bdc1" textLength="83.71" lengthAdjust="spacingAndGlyphs">Apps Instances</text>
<text x="50.33" y="220.80" font-size="12.32" font-weight="700" fill="#b3bdc1" textLength="104.36" lengthAdjust="spacingAndGlyphs">Canary App Health</text>
<text x="50.33" y="253.90" font-size="12.32" font-weight="700" fill="#b3bdc1" textLength="48.67" lengthAdjust="spacingAndGlyphs">Capacity</text>
<text x="50.33" y="287.10" font-size="12.32" font-weight="700" fill="#b3bdc1" textLength="118.39" lengthAdjust="spacingAndGlyphs">CLI Command Health</text>
<text x="50.33" y="320.30" font-size="12.32" font-weight="700" fill="#b3bdc1" textLength="126.28" lengthAdjust="spacingAndGlyphs">Compute Performance</text>
<text x="49.99" y="353.50" font-size="12.32" font-weight="700" fill="#ffffff" textLength="120.01" lengthAdjust="spacingAndGlyphs">Logging Performance</text>
<text x="49.96" y="386.70" font-size="12.32" font-weight="700" fill="#b3bdc1" textLength="45.44" lengthAdjust="spacingAndGlyphs">Routing</text>
<text x="50.16" y="419.90" font-size="12.32" font-weight="700" fill="#b3bdc1" textLength="23.12" lengthAdjust="spacingAndGlyphs">UAA</text>
<text x="302.93" y="180.50" font-size="14.78" font-weight="700" fill="#1d2124" textLength="161.88" lengthAdjust="spacingAndGlyphs">Firehose Performance</text>
<text x="303.40" y="818.00" font-size="14.78" font-weight="700" fill="#1d2124" textLength="211.73" lengthAdjust="spacingAndGlyphs">CF Syslog Drain Performance</text>
<text x="1380.05" y="156.50" font-size="11.23" font-weight="400" fill="#3f474b">deployment</text>
<text x="317.24" y="224.00" font-size="10.90" font-weight="700" fill="#5b6064">Log Transport Loss Rate</text>
<text x="366.92" y="240.00" font-size="7.80" font-weight="400" fill="#6f7477">1 %</text>
<text x="360.44" y="263.00" font-size="7.80" font-weight="400" fill="#6f7477">0.5 %</text>
<text x="366.92" y="285.00" font-size="7.80" font-weight="400" fill="#6f7477">0 %</text>
<text x="317.24" y="370.00" font-size="10.90" font-weight="700" fill="#5b6064">Log Transport Throughput Rate</text>
<text x="367.54" y="386.00" font-size="7.80" font-weight="400" fill="#6f7477">20k</text>
<text x="367.54" y="408.00" font-size="7.80" font-weight="400" fill="#6f7477">10k</text>
<text x="376.04" y="431.00" font-size="7.80" font-weight="400" fill="#6f7477">0</text>
<text x="317.24" y="515.00" font-size="10.90" font-weight="700" fill="#5b6064">Log Transport Dropped Messages</text>
<text x="376.12" y="531.00" font-size="7.80" font-weight="400" fill="#6f7477">1</text>
<text x="369.57" y="554.00" font-size="7.80" font-weight="400" fill="#6f7477">0.5</text>
<text x="376.04" y="576.00" font-size="7.80" font-weight="400" fill="#6f7477">0</text>
<text x="317.24" y="661.00" font-size="10.90" font-weight="700" fill="#5b6064">Doppler Average Message Load</text>
<text x="367.54" y="677.00" font-size="7.80" font-weight="400" fill="#6f7477">20k</text>
<text x="367.54" y="700.00" font-size="7.80" font-weight="400" fill="#6f7477">10k</text>
<text x="376.04" y="722.00" font-size="7.80" font-weight="400" fill="#6f7477">0</text>
<text x="317.67" y="862.00" font-size="10.90" font-weight="700" fill="#5b6064">Adapter Loss Rate</text>
<text x="366.92" y="878.00" font-size="7.80" font-weight="400" fill="#6f7477">1 %</text>
<text x="360.44" y="901.00" font-size="7.80" font-weight="400" fill="#6f7477">0.5 %</text>
<text x="366.92" y="923.00" font-size="7.80" font-weight="400" fill="#6f7477">0 %</text>
<text x="317.24" y="1008.00" font-size="10.90" font-weight="700" fill="#5b6064">Reverse Log Proxy Loss Rate</text>
<text x="366.92" y="1024.00" font-size="7.80" font-weight="400" fill="#6f7477">1 %</text>
<text x="360.44" y="1046.00" font-size="7.80" font-weight="400" fill="#6f7477">0.5 %</text>
<text x="366.92" y="1069.00" font-size="7.80" font-weight="400" fill="#6f7477">0 %</text>
</svg>
</body>
</html>
